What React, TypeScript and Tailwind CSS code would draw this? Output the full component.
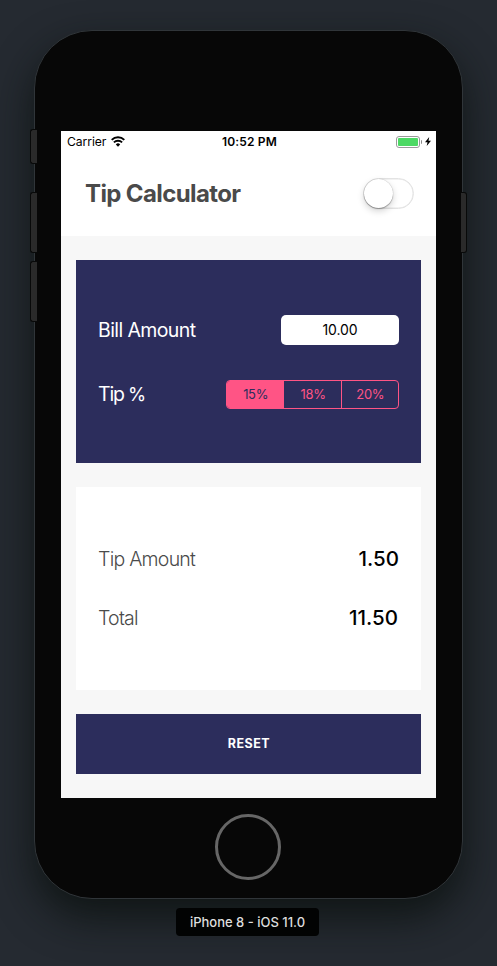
import { useState } from "react";

const TIPS = [15, 18, 20];

function StatusBar() {
  return (
    <div className="grid h-5 grid-cols-3 items-center pl-1.5 pr-[5px] pt-px text-[12px] leading-5 text-black">
      <div className="flex items-center gap-[5px]">
        <span className="text-[12.2px] tracking-[-0.1px]">Carrier</span>
        <svg className="mb-0.5" width="14" height="11" viewBox="0 0 14 11" fill="none" stroke="#000" strokeWidth="1.9">
          <path d="M0.7 3.9a8.9 8.9 0 0 1 12.6 0" />
          <path d="M2.9 6.4a5.8 5.8 0 0 1 8.2 0" />
          <path d="M7 10.7 4.8 8.4a3.1 3.1 0 0 1 4.4 0Z" fill="#000" stroke="none" />
        </svg>
      </div>
      <div className="pl-px text-center font-semibold tracking-[0.15px]">10:52 PM</div>
      <div className="flex items-center justify-end">
        <div className="h-3 w-6 rounded-[3px] border border-[#9a9a9a] p-px">
          <div className="h-full w-full rounded-[1px] bg-[#4cd964]" />
        </div>
        <div className="ml-px h-1 w-px rounded-r bg-[#8a8a8a]" />
        <svg className="mb-0.5 ml-[3px]" width="6" height="9" viewBox="0 0 6 9">
          <path d="M4.2 0 0 5.2h2.5L1.7 9 6 3.7H3.5Z" fill="#000" />
        </svg>
      </div>
    </div>
  );
}

function SideButton({ className }: { className: string }) {
  return <div className={`absolute border border-[#080909] bg-[#2a2a2a] ${className}`} />;
}

export default function App() {
  const [tip, setTip] = useState(15);
  const [dark, setDark] = useState(false);
  const [bill, setBill] = useState("10.00");
  const amount = Number(bill) || 0;
  const tipAmount = (amount * tip) / 100;

  return (
    <div className="flex h-[966px] w-[497px] flex-col items-center overflow-hidden bg-[#252a31] pt-[30px] font-['Inter',sans-serif]">
      <div className="relative flex h-[869px] w-[429px] shrink-0 flex-col items-center rounded-[58px] border border-[#303539] bg-[#070707] pt-[100px] shadow-[0_18px_40px_rgba(10,16,14,0.8)]">
        <SideButton className="-left-[5px] top-[98px] h-[35px] w-[7px] rounded-l-[3px] border-r-0" />
        <SideButton className="-left-[5px] top-[161px] h-[61px] w-[7px] rounded-l-[3px] border-r-0" />
        <SideButton className="-left-[5px] top-[230px] h-[61px] w-[7px] rounded-l-[3px] border-r-0" />
        <SideButton className="-right-[5px] top-[161px] h-[61px] w-[6px] rounded-r-[3px] border-l-0" />

        <main className="flex h-[667px] w-[375px] shrink-0 flex-col bg-[#f7f7f7]">
          <header className="h-[105px] bg-white">
            <StatusBar />
            <div className="flex h-[85px] items-center justify-between pl-6 pr-[22px]">
              <h1 className="pt-px text-[24px] font-bold tracking-[-0.62px] text-[#4a4a4a]">Tip Calculator</h1>
              <button
                onClick={() => setDark(!dark)}
                aria-label="Theme"
                className="h-[31px] w-[51px] rounded-full border-[1.5px] border-[#e3e3e3] bg-white shadow-[inset_0_0_0_0.5px_#e5e5e5]"
              >
                <span className="block h-[29px] w-[29px] rounded-full bg-white shadow-[0_3px_7px_rgba(0,0,0,0.18),0_1px_1px_rgba(0,0,0,0.28),0_0_1px_rgba(0,0,0,0.3)]" />
              </button>
            </div>
          </header>

          <div className="flex flex-col gap-6 px-[15px] pt-6">
            <section className="flex h-[203px] flex-col gap-[34px] bg-[#2c2d5c] px-[22px] pt-[55px] text-white">
              <div className="flex h-[30px] items-center justify-between">
                <label className="pt-0.5 text-[19.5px] tracking-[-0.6px]">Bill Amount</label>
                <input
                  value={bill}
                  onChange={(e) => setBill(e.target.value)}
                  className="h-[30px] w-[118px] rounded-[5px] bg-white pb-px text-center text-[14px] tracking-[-0.1px] text-black"
                />
              </div>
              <div className="flex h-[30px] items-center justify-between">
                <span className="pt-0.5 text-[19.5px] tracking-[-1.2px]">
                  Tip <span className="text-[18.5px]">%</span>
                </span>
                <div className="flex h-[29px] w-[173px] overflow-hidden rounded-[4px] border border-[#ff5485]">
                  {TIPS.map((t) => (
                    <button
                      key={t}
                      onClick={() => setTip(t)}
                      className={`flex-1 border-r border-[#ff5485] pl-px pt-0.5 text-[13px] tracking-[-0.3px] last:border-r-0 ${
                        t === tip ? "bg-[#ff5485] text-[#2c2d5c]" : "text-[#ff5485]"
                      }`}
                    >
                      {t}%
                    </button>
                  ))}
                </div>
              </div>
            </section>

            <section className="flex h-[203px] flex-col gap-[29px] bg-white px-[22px] pt-[57px] text-[20px]">
              <div className="flex h-[30px] items-center justify-between">
                <span className="pt-0.5 text-[19.5px] font-light tracking-[-0.75px] text-[#4a4a4a]">Tip Amount</span>
                <span className="pt-px text-[20.5px] font-medium text-black">{tipAmount.toFixed(2)}</span>
              </div>
              <div className="flex h-[30px] items-center justify-between">
                <span className="pt-0.5 text-[19.5px] font-light tracking-[-0.75px] text-[#4a4a4a]">Total</span>
                <span className="pt-px pr-px text-[20.5px] font-medium text-black">{(amount + tipAmount).toFixed(2)}</span>
              </div>
            </section>

            <button
              onClick={() => {
                setBill("10.00");
                setTip(15);
              }}
              className="h-[60px] bg-[#2c2d5c] pl-px pt-px text-[12.5px] font-bold tracking-[0.5px] text-white"
            >
              RESET
            </button>
          </div>
        </main>

        <div className="mr-px mt-4 h-[66px] w-[66px] shrink-0 rounded-full border-[3px] border-[#666]" />
      </div>

      <div className="z-10 mr-0.5 mt-[9px] flex h-7 w-[143px] shrink-0 items-center justify-center rounded-[4px] bg-[#020303] pt-0.5 text-[13px] font-medium text-[#dedede]">
        iPhone 8 - iOS 11.0
      </div>
    </div>
  );
}
